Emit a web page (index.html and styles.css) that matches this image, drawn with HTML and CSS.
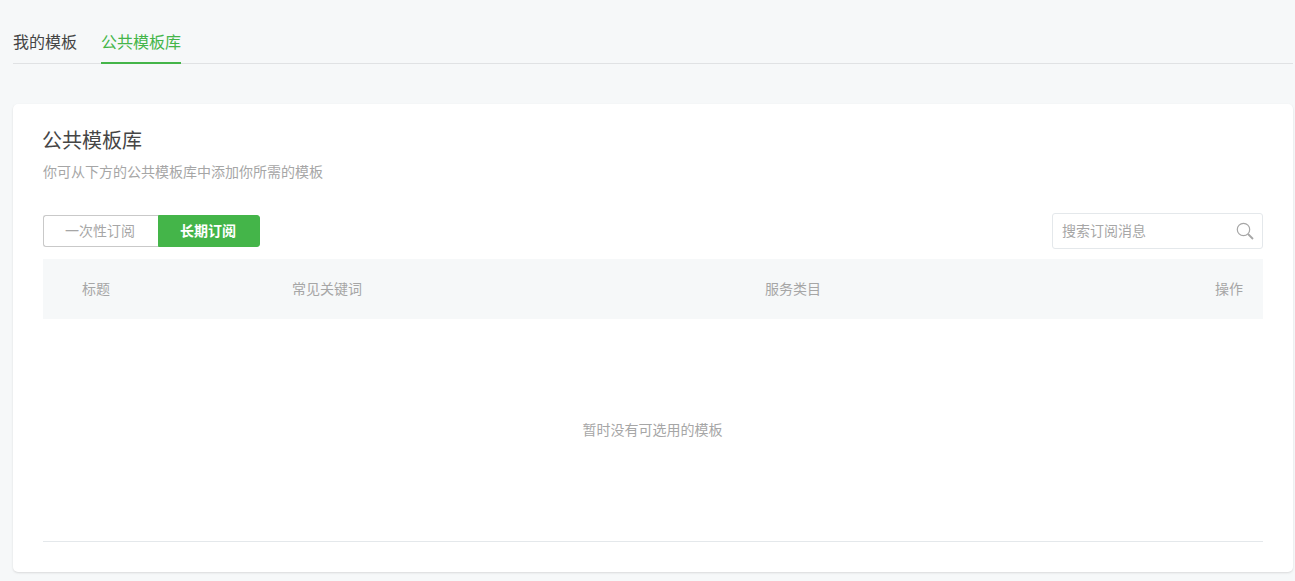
FILE: index.html
```html
<!DOCTYPE html>
<html lang="zh">
<head>
<meta charset="utf-8">
<title>公共模板库</title>
<link rel="stylesheet" href="styles.css">
</head>
<body>
<main class="page">
  <nav class="tabs">
    <a class="tab">我的模板</a>
    <a class="tab tab-active">公共模板库</a>
  </nav>
  <section class="card">
    <h2 class="title">公共模板库</h2>
    <p class="desc">你可从下方的公共模板库中添加你所需的模板</p>
    <div class="toolbar">
      <div class="switch">
        <button class="seg seg-off">一次性订阅</button>
        <button class="seg seg-on">长期订阅</button>
      </div>
      <div class="search">
        <span class="search-text">搜索订阅消息</span>
        <svg class="search-icon" width="18" height="18" viewBox="0 0 18 18" fill="none" stroke="#a6a6a6">
          <circle cx="7.5" cy="7.5" r="6.2" stroke-width="1.2"/>
          <path d="M12 12l5 5" stroke-width="1.8"/>
        </svg>
      </div>
    </div>
    <div class="thead">
      <span class="col col-title">标题</span>
      <span class="col col-key">常见关键词</span>
      <span class="col col-cat">服务类目</span>
      <span class="col col-op">操作</span>
    </div>
    <div class="empty">暂时没有可选用的模板</div>
  </section>
</main>
</body>
</html>
```

FILE: styles.css
```css
* { box-sizing: border-box; }
html, body { margin: 0; height: 100%; }
body {
  background: #f6f8f9;
  font-family: "Liberation Sans", "Noto Sans CJK SC", sans-serif;
  color: #454545;
  overflow: hidden;
}
.page { padding: 0 2px 0 13px; }
.tabs {
  display: flex;
  gap: 24px;
  height: 64px;
  padding-top: 32px;
  border-bottom: 1px solid #e0e2e4;
}
.tab {
  display: block;
  height: 32px;
  font-size: 16px;
  line-height: 22px;
  color: #454545;
}
.tab-active {
  color: #44b549;
  border-bottom: 2px solid #44b549;
}
.card {
  margin-top: 40px;
  height: 468px;
  padding: 24px 30px 0;
  background: #fff;
  border-radius: 5px;
  box-shadow: 0 1px 2px rgba(150,150,150,.3);
}
.title {
  margin: 0;
  font-size: 20px;
  font-weight: 400;
  line-height: 26px;
  color: #454545;
  text-indent: -1px;
}
.desc {
  margin: 8px 0 0;
  font-size: 14px;
  line-height: 20px;
  color: #a6a6a6;
}
.toolbar {
  display: flex;
  justify-content: space-between;
  align-items: flex-start;
  margin-top: 31px;
}
.switch { display: flex; margin-top: 2px; }
.seg {
  height: 32px;
  padding: 0 2px 0 0;
  font-family: inherit;
  font-size: 14px;
  line-height: 30px;
  border: 1px solid #c9c9c9;
}
.seg-off {
  width: 115px;
  color: #a6a6a6;
  background: #fff;
  border-right: 0;
  border-radius: 3px 0 0 3px;
}
.seg-on {
  width: 102px;
  color: #fff;
  font-weight: 700;
  background: #44b549;
  border-color: #44b549;
  border-radius: 0 3px 3px 0;
}
.search {
  display: flex;
  justify-content: space-between;
  align-items: center;
  width: 211px;
  height: 36px;
  padding: 0 8px 0 9px;
  background: #fff;
  border: 1px solid #e4e8eb;
  border-radius: 3px;
}
.search-text { font-size: 14px; color: #a6a6a6; margin-bottom: 2px; }
.thead {
  display: flex;
  align-items: center;
  height: 60px;
  padding-bottom: 2px;
  margin-top: 10px;
  background: #f6f8f9;
  font-size: 14px;
  color: #a6a6a6;
}
.col-title { width: 249px; padding-left: 39px; }
.col-key { width: 473px; }
.col-cat { flex: 1; }
.col-op { padding-right: 20px; }
.empty {
  display: flex;
  align-items: center;
  justify-content: center;
  height: 223px;
  padding: 0 1px 2px 0;
  font-size: 14px;
  color: #a6a6a6;
  border-bottom: 1px solid #e4e8eb;
}
```
